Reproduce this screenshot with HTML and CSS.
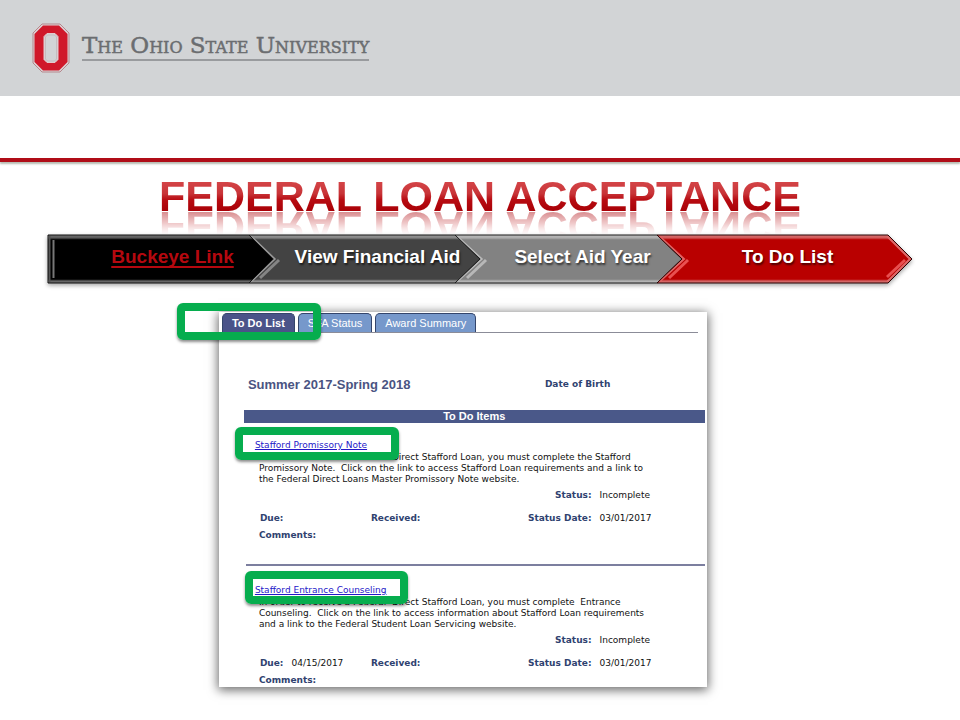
FILE: index.html
```html
<!DOCTYPE html>
<html lang="en">
<head>
<meta charset="utf-8">
<title>Federal Loan Acceptance</title>
<link rel="stylesheet" href="styles.css">
</head>
<body>
<header class="masthead">
  <svg class="logo" viewBox="0 0 38 50" aria-hidden="true">
    <path d="M10 1H28L37 10V40L28 49H10L1 40V10Z" fill="#dcd3d5" stroke="#b5878d" stroke-width="1"/>
    <path d="M11 2.500H27L35.500 11V39L27 47.500H11L2.500 39V11Z" fill="#d0182a"/>
    <path d="M15 10.500H23L26 13.500V36.500L23 39.500H15L12 36.500V13.500Z" fill="#d2d4d6" stroke="#e3c9cd" stroke-width="1"/>
    <path d="M15.500 12H22.500L24.500 14V36L22.500 38H15.500L13.500 36V14Z" fill="#d2d4d6" stroke="#b9a6a9" stroke-width=".5"/>
  </svg>
  <span class="wordmark">The Ohio State University</span>
</header>
<main>
  <div class="rule"></div>
  <h1 class="title">FEDERAL LOAN ACCEPTANCE</h1>
  <nav class="steps">
    <svg class="steps-art" viewBox="0 0 866 50" preserveAspectRatio="none" aria-hidden="true">
      <defs>
        <linearGradient id="edge" x1="0" y1="0" x2="0" y2="1">
          <stop offset="0" stop-color="#fff" stop-opacity=".45"/>
          <stop offset=".06" stop-color="#fff" stop-opacity=".35"/>
          <stop offset=".1" stop-color="#fff" stop-opacity="0"/>
          <stop offset=".92" stop-color="#fff" stop-opacity="0"/>
          <stop offset=".96" stop-color="#fff" stop-opacity=".4"/>
          <stop offset="1" stop-color="#fff" stop-opacity=".4"/>
        </linearGradient>
      </defs>
      <path d="M1 1H202L226 25L202 49H1Z" fill="#000"/>
      <path d="M1 1H202L226 25L202 49H1Z" fill="url(#edge)" stroke="#111"/>
      <path d="M2.500 2V48" stroke="#555" stroke-width="2"/>
      <path d="M6.500 6V44" stroke="#777" stroke-width="2"/>
      <path d="M202 1H408L433 25L408 49H202L226 25Z" fill="#434343"/>
      <path d="M202 1H408L433 25L408 49H202L226 25Z" fill="url(#edge)"/>
      <path d="M204 2L228 25L204 48" fill="none" stroke="#999" stroke-width="1.500"/>
      <path d="M232 26L213 44" stroke="#858585" stroke-width="3"/>
      <path d="M202 1H408L433 25L408 49H202L226 25Z" fill="none" stroke="#161616"/>
      <path d="M408 1H610L635 25L610 49H408L433 25Z" fill="#828282"/>
      <path d="M408 1H610L635 25L610 49H408L433 25Z" fill="url(#edge)"/>
      <path d="M410 2L435 25L410 48" fill="none" stroke="#bbb" stroke-width="1.500"/>
      <path d="M439 26L420 44" stroke="#b8b8b8" stroke-width="3"/>
      <path d="M408 1H610L635 25L610 49H408L433 25Z" fill="none" stroke="#1c1c1c"/>
      <path d="M610 1H841L865 25L841 49H610L635 25Z" fill="#b90000"/>
      <path d="M610 1H841L865 25L841 49H610L635 25Z" fill="url(#edge)"/>
      <path d="M612 2L637 25L612 48" fill="none" stroke="#e06464" stroke-width="2"/>
      <path d="M641 26L622 44" stroke="#e85050" stroke-width="3"/>
      <path d="M840 2L863 25L840 48" fill="none" stroke="#dd6a6a" stroke-width="2"/>
      <path d="M858 26L840 43" stroke="#e85050" stroke-width="3"/>
      <path d="M610 1H841L865 25L841 49H610L635 25Z" fill="none" stroke="#2a0505"/>
    </svg>
    <a class="step step-link" href="#">Buckeye Link</a>
    <span class="step">View Financial Aid</span>
    <span class="step">Select Aid Year</span>
    <span class="step">To Do List</span>
  </nav>
  <section class="panel">
    <div class="tabs">
      <button class="tab tab-active" type="button">To Do List</button>
      <button class="tab" type="button">SFA Status</button>
      <button class="tab" type="button">Award Summary</button>
      <span class="mark mark-tab"></span>
    </div>
    <div class="term">
      <h2 class="term-name">Summer 2017-Spring 2018</h2>
      <span class="label">Date of Birth</span>
    </div>
    <h3 class="bar">To Do Items</h3>
    <article class="item">
      <div class="item-head"><a class="item-link" href="#">Stafford Promissory Note</a><span class="mark mark-note"></span></div>
      <p class="desc">In order to receive a Federal&nbsp; Direct Stafford Loan, you must complete the Stafford<br>Promissory Note.&nbsp; Click on the link to access Stafford Loan requirements and a link to<br>the Federal Direct Loans Master Promissory Note website.</p>
      <div class="row status"><span></span><span></span><span class="label end">Status:</span><span>Incomplete</span></div>
      <div class="row dates"><span class="due"><span class="label">Due:</span></span><span class="label">Received:</span><span class="label end">Status Date:</span><span>03/01/2017</span></div>
      <div class="label comments">Comments:</div>
    </article>
    <article class="item">
      <div class="item-head"><a class="item-link" href="#">Stafford Entrance Counseling</a><span class="mark mark-counseling"></span></div>
      <p class="desc">In order to receive a Federal&nbsp; Direct Stafford Loan, you must complete&nbsp; Entrance<br>Counseling.&nbsp; Click on the link to access information about Stafford Loan requirements<br>and a link to the Federal Student Loan Servicing website.</p>
      <div class="row status"><span></span><span></span><span class="label end">Status:</span><span>Incomplete</span></div>
      <div class="row dates"><span class="due"><span class="label">Due:</span><span>04/15/2017</span></span><span class="label">Received:</span><span class="label end">Status Date:</span><span>03/01/2017</span></div>
      <div class="label comments">Comments:</div>
    </article>
  </section>
</main>
</body>
</html>
```
FILE: styles.css
```css
* { box-sizing: border-box; }
body {
  margin: 0;
  background: #fff;
  font-family: "Liberation Sans", Arial, sans-serif;
}
.masthead {
  display: flex;
  align-items: flex-start;
  gap: 12px;
  height: 96px;
  padding: 23px 32px;
  background: #d2d4d6;
}
.logo { width: 38px; height: 50px; }
.wordmark {
  margin-top: 8px;
  border-bottom: 2px solid #999b9e;
  font-family: "DejaVu Serif", serif;
  font-size: 23px;
  line-height: 28px;
  font-variant: small-caps;
  color: #6b6d70;
  -webkit-text-stroke: 0.5px #6b6d70;
}
.rule {
  height: 4px;
  margin-top: 62px;
  background: #b00d18;
  box-shadow: 0 2px 2px rgba(110, 120, 100, 0.5);
}
.title {
  width: fit-content;
  margin: 10px auto 14px;
  font-size: 43px;
  line-height: 48px;
  white-space: nowrap;
  color: transparent;
  background: linear-gradient(#d84a4c 12%, #c83438 45%, #b80c12 58%, #a80006 82%);
  -webkit-background-clip: text;
  background-clip: text;
  -webkit-box-reflect: below -17px linear-gradient(transparent 34%, rgba(0, 0, 0, 0.45) 82%);
}
.steps {
  position: relative;
  display: grid;
  grid-template-columns: repeat(4, 1fr);
  margin: 0 47px;
  padding: 0 23px;
  line-height: 46px;
}
.steps-art {
  position: absolute;
  inset: 0;
  width: 100%;
  height: 50px;
  filter: drop-shadow(0 2px 2px rgba(0, 0, 0, 0.35));
}
.step {
  position: relative;
  height: 50px;
  text-align: center;
  white-space: nowrap;
  font-size: 19px;
  font-weight: bold;
  color: #fff;
  text-shadow: 1px 2px 2px rgba(0, 0, 0, 0.6);
}
.step-link {
  color: #b5080f;
  text-decoration-thickness: 2px;
  text-underline-offset: 3px;
  text-decoration-skip-ink: none;
}
.panel {
  width: 50.8%;
  margin: 28px 0 32px 22.8%;
  padding: 1px 2px 1px 3px;
  background: #fff;
  box-shadow: 0 2px 10px 1px rgba(0, 0, 0, 0.6);
  font-family: "DejaVu Sans", Verdana, sans-serif;
  font-size: 9px;
  line-height: 11px;
  color: #111;
}
.tabs {
  position: relative;
  display: flex;
  gap: 3px;
  margin-right: 7px;
  border-bottom: 1px solid #8b8c98;
}
.tab {
  height: 19px;
  padding: 0 9px;
  border: 1px solid #34456b;
  border-bottom: 0;
  border-radius: 5px 5px 0 0;
  background: #7698cb;
  color: #fff;
  font-family: "Liberation Sans", Arial, sans-serif;
  font-size: 11px;
  line-height: 18px;
}
.tab-active {
  background: #4a5389;
  font-weight: bold;
}
.mark {
  position: absolute;
  border: 8px solid #06ad4e;
  border-radius: 6px;
  box-shadow: 0 2px 3px rgba(0, 0, 0, 0.45);
}
.mark-tab {
  left: -45px;
  top: -10px;
  width: 144px;
  height: 37px;
}
.mark-note { inset: -11px -32px -8px -20px; }
.mark-counseling { inset: -12px -22px -7px -10px; }
.term {
  display: grid;
  grid-template-columns: 297px 1fr;
  align-items: center;
  margin: 44px 0 18px 26px;
}
.term-name {
  margin: 0;
  font-family: "Liberation Sans", Arial, sans-serif;
  font-size: 13px;
  line-height: 15px;
  color: #4a5482;
}
.label {
  font-weight: bold;
  color: #2f4270;
}
.bar {
  margin: 0 0 0 22px;
  background: #4a5889;
  color: #fff;
  text-align: center;
  font-family: "Liberation Sans", Arial, sans-serif;
  font-size: 11px;
  line-height: 13px;
}
.item {
  margin-left: 24px;
  padding: 15px 0 23px 13px;
}
.item + .item {
  padding: 17px 0 0 13px;
  border-top: 2px solid #7c7f9f;
}
.item-head {
  position: relative;
  width: fit-content;
  margin-left: -4px;
  line-height: 14px;
}
.item-link { color: #2418c8; }
.desc {
  margin: 0;
  white-space: nowrap;
}
.row {
  display: grid;
  grid-template-columns: 111px 1fr 100px 113px;
  padding-left: 1px;
}
.row > :last-child { padding-left: 8px; }
.status { margin-top: 5px; }
.dates { margin-top: 12px; }
.due { display: flex; gap: 8px; }
.end { text-align: right; }
.comments { margin-top: 6px; }
```
